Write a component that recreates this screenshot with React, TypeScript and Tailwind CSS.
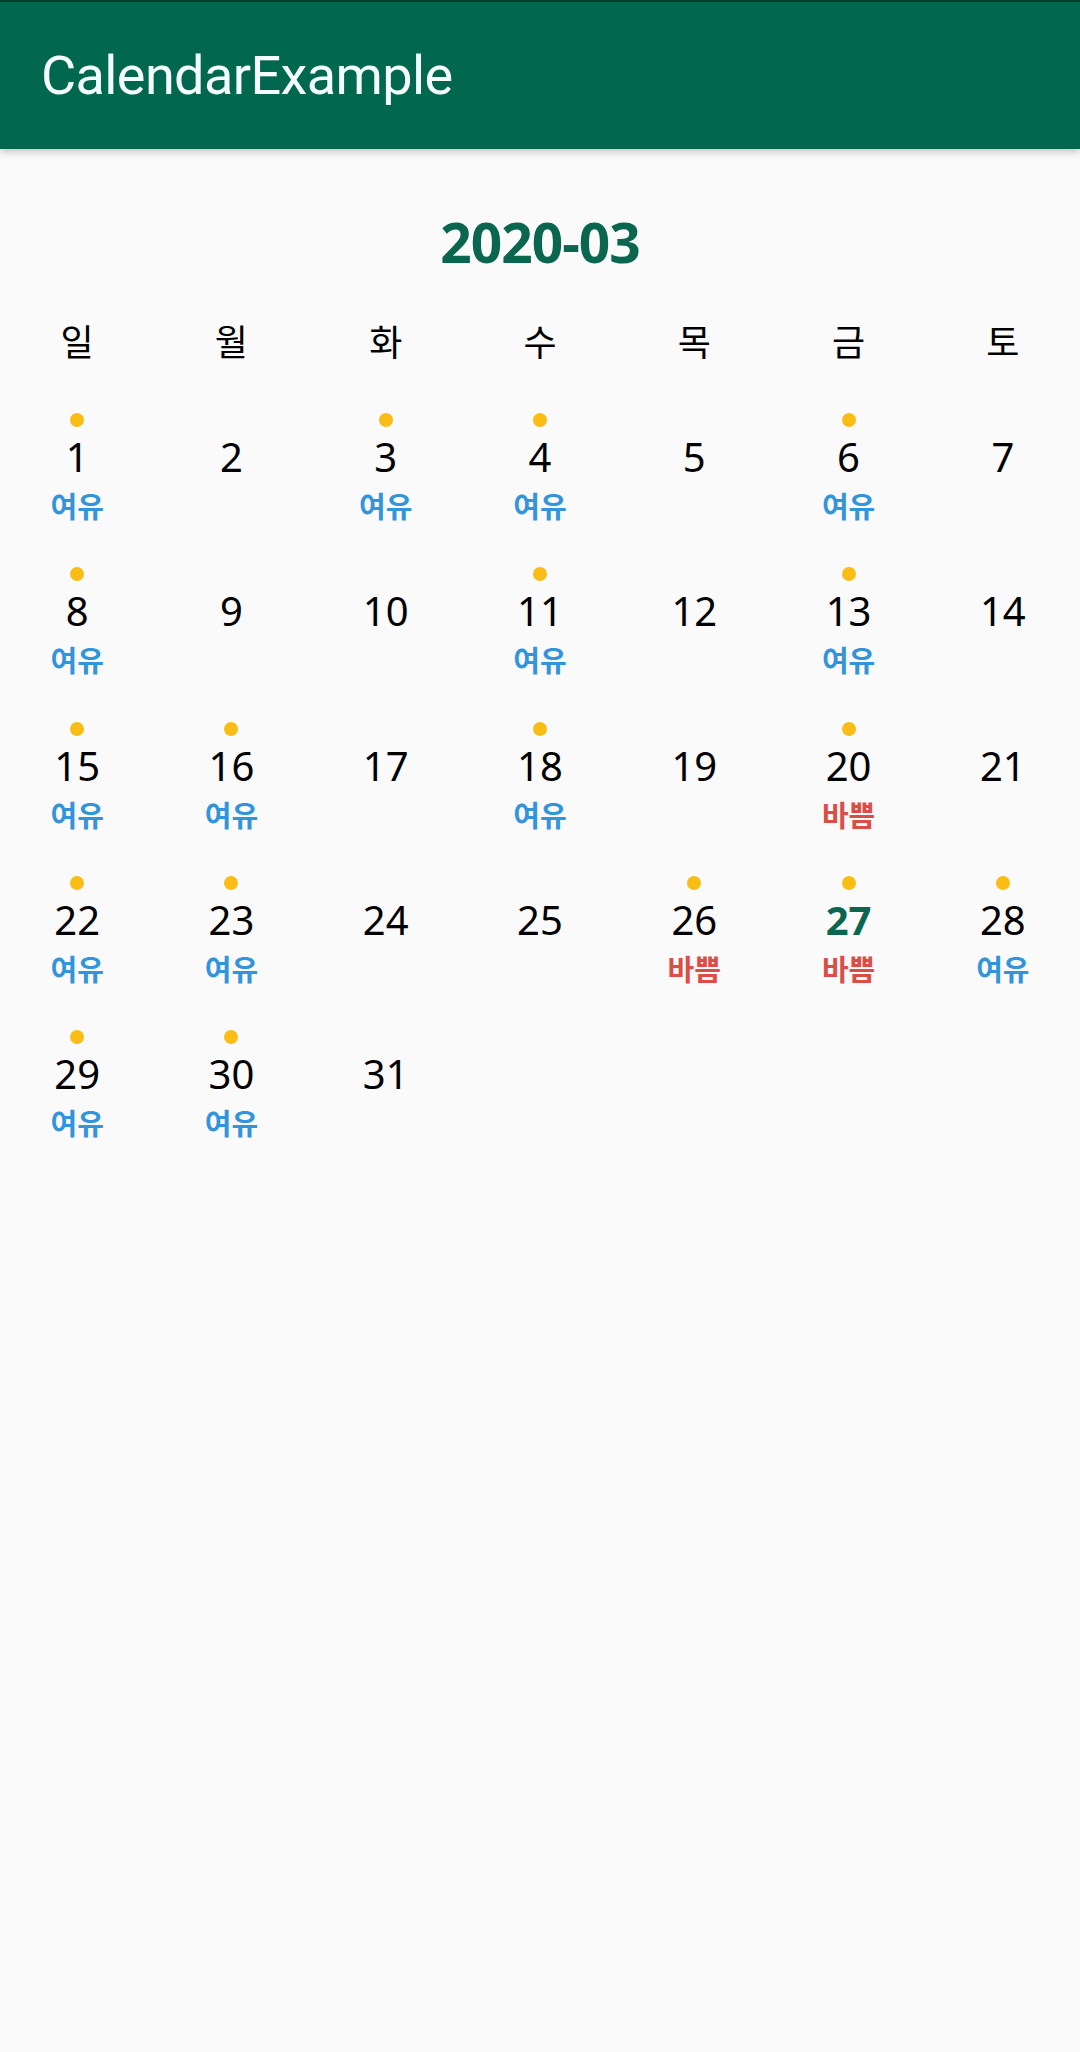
import React from 'react';

type Status = 'free' | 'busy';

interface Day {
  day: number;
  status?: Status;
}

const weekdays = ['일', '월', '화', '수', '목', '금', '토'];

const statusByDay: Record<number, Status> = {
  1: 'free', 3: 'free', 4: 'free', 6: 'free',
  8: 'free', 11: 'free', 13: 'free',
  15: 'free', 16: 'free', 18: 'free', 20: 'busy',
  22: 'free', 23: 'free', 26: 'busy', 27: 'busy', 28: 'free',
  29: 'free', 30: 'free',
};

const days: Day[] = Array.from({ length: 31 }, (_, i) => ({
  day: i + 1,
  status: statusByDay[i + 1],
}));

const TODAY = 27;

const font = { fontFamily: '"Noto Sans", "Noto Sans CJK KR", sans-serif' };

const DayCell = ({ item }: { item: Day }) => {
  const isToday = item.day === TODAY;
  return (
    <div className="flex h-[154.3px] flex-col items-center pt-[23px]">
      <div className={`h-[14px] w-[14px] rounded-full ${item.status ? 'bg-[#f9bd15]' : 'bg-transparent'}`} />
      <div
        className={`mt-[6px] text-[40px] leading-[48px] ${isToday ? 'font-bold text-[#0b6650]' : 'text-black'}`}
      >
        {item.day}
      </div>
      <div
        className={`mt-[8px] h-[36px] text-[29px] font-bold leading-[36px] ${
          item.status === 'busy' ? 'text-[#db4d45]' : 'text-[#3294db]'
        }`}
      >
        {item.status === 'busy' ? '바쁨' : item.status === 'free' ? '여유' : ''}
      </div>
    </div>
  );
};

export default function App() {
  return (
    <div className="min-h-[2052px] w-[1080px] bg-[#fafafa]" style={font}>
      <header className="relative z-10 h-[149px] border-t-[2px] border-t-[#053d31] bg-[#02674f] shadow-[0_2px_8px_rgba(0,0,0,0.25)]">
        <div className="flex h-full items-center pl-[41px]">
          <h1 className="text-[54px] leading-none tracking-[-0.6px] text-[#f4fffb]" style={{ fontFamily: 'Roboto, "Noto Sans", sans-serif' }}>
            CalendarExample
          </h1>
        </div>
      </header>

      <main>
        <h2 className="mt-[61px] text-center text-[55px] font-bold leading-[64px] tracking-[-1px] text-[#0b6650]">2020-03</h2>

        <div className="mt-[47px] grid grid-cols-7">
          {weekdays.map((w) => (
            <div key={w} className="text-center text-[36px] leading-[44px] text-black">
              {w}
            </div>
          ))}
        </div>

        <div className="mt-[25px] grid grid-cols-7">
          {days.map((d) => (
            <DayCell key={d.day} item={d} />
          ))}
        </div>
      </main>
    </div>
  );
}
